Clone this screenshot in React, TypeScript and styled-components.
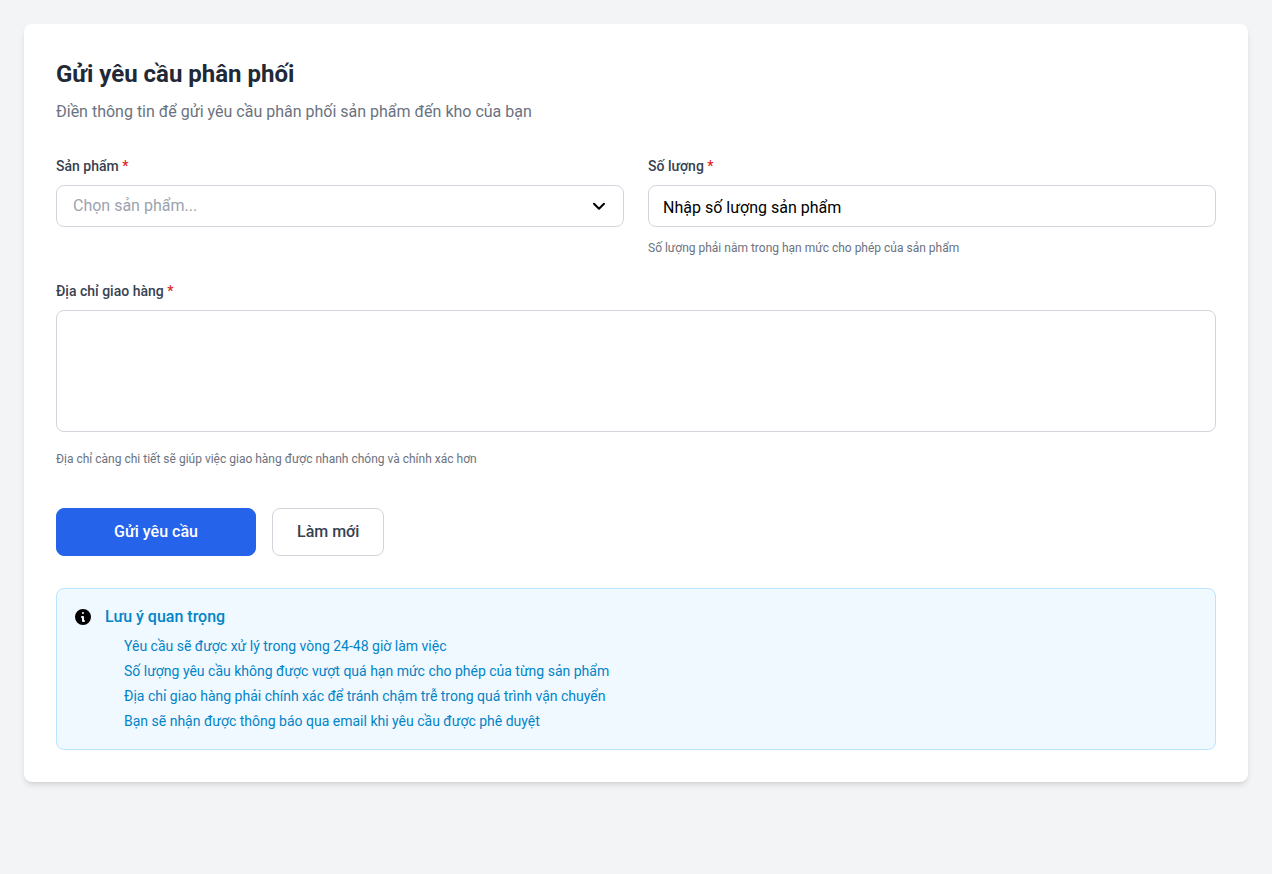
import React from 'react';
import styled, { createGlobalStyle } from 'styled-components';

const GlobalStyle = createGlobalStyle`
  *, *::before, *::after { box-sizing: border-box; }
  body {
    margin: 0;
    background: #f3f4f6;
    color: #1f2937;
    font-family: Roboto, sans-serif;
    font-size: 16px;
    line-height: 24px;
  }
  button, input, textarea, select { font: inherit; }
`;

const Page = styled.div`
  padding: 24px;
`;

const Card = styled.main`
  padding: 32px;
  background: #ffffff;
  border-radius: 8px;
  box-shadow: 0 4px 6px -1px rgba(0, 0, 0, 0.1), 0 2px 4px -2px rgba(0, 0, 0, 0.1);
`;

const Header = styled.header`
  margin-bottom: 32px;
`;

const Title = styled.h1`
  margin: 0 0 8px;
  font-size: 24px;
  line-height: 36px;
  font-weight: 700;
`;

const Subtitle = styled.p`
  margin: 0;
  color: #6b7280;
`;

const Form = styled.form`
  display: flex;
  flex-direction: column;
  gap: 24px;
`;

const Row = styled.div`
  display: grid;
  grid-template-columns: repeat(2, minmax(0, 1fr));
  gap: 24px;
`;

const Field = styled.div`
  display: flex;
  flex-direction: column;
`;

const Label = styled.label`
  margin-bottom: 8px;
  color: #374151;
  font-size: 14px;
  line-height: 21px;
  font-weight: 500;
`;

const Required = styled.span`
  color: #dc2626;
`;

const SelectBox = styled.div`
  display: grid;
  align-items: center;

  > * { grid-area: 1 / 1; }
  > svg {
    justify-self: end;
    margin-right: 16px;
    pointer-events: none;
  }
`;

const Select = styled.select`
  appearance: none;
  width: 100%;
  height: 42px;
  padding: 0 40px 0 16px;
  border: 1px solid #d1d5db;
  border-radius: 8px;
  background: #ffffff;
  color: #9ca3af;
`;

const Input = styled.input`
  width: 100%;
  height: 42px;
  padding: 2px 14px 0;
  border: 1px solid #d1d5db;
  border-radius: 8px;
  background: #ffffff;
  color: #000000;
  &::placeholder { color: #000000; opacity: 1; }
`;

const TextArea = styled.textarea`
  display: block;
  width: 100%;
  height: 122px;
  padding: 12px 16px;
  border: 1px solid #d1d5db;
  border-radius: 8px;
  background: #ffffff;
  resize: none;
`;

const Hint = styled.p<{ $gap: number }>`
  margin: ${({ $gap }) => $gap}px 0 0;
  color: #6b7280;
  font-size: 12px;
  line-height: 18px;
`;

const Actions = styled.div`
  display: flex;
  gap: 16px;
  padding-top: 16px;
`;

const Button = styled.button<{ $primary?: boolean }>`
  height: 48px;
  min-width: ${({ $primary }) => ($primary ? '200px' : '112px')};
  padding: 0 24px;
  border: 1px solid ${({ $primary }) => ($primary ? '#2563eb' : '#d1d5db')};
  border-radius: 8px;
  background: ${({ $primary }) => ($primary ? '#2563eb' : '#ffffff')};
  color: ${({ $primary }) => ($primary ? '#ffffff' : '#374151')};
  font-weight: 500;
  cursor: pointer;
`;

const Notice = styled.aside`
  display: flex;
  gap: 12px;
  margin-top: 32px;
  padding: 16px;
  border: 1px solid #bae6fd;
  border-radius: 8px;
  background: #f0f9ff;
  color: #0284c7;

  > svg { flex: none; margin-top: 2px; }
`;

const NoticeTitle = styled.h2`
  margin: 0 0 8px;
  font-size: 16px;
  line-height: 24px;
  font-weight: 500;
`;

const NoticeList = styled.ul`
  display: flex;
  flex-direction: column;
  gap: 6px;
  margin: 0;
  padding: 0 0 2px 19px;
  list-style: none;
  font-size: 14px;
  line-height: 19px;
`;

const notes = [
  'Yêu cầu sẽ được xử lý trong vòng 24-48 giờ làm việc',
  'Số lượng yêu cầu không được vượt quá hạn mức cho phép của từng sản phẩm',
  'Địa chỉ giao hàng phải chính xác để tránh chậm trễ trong quá trình vận chuyển',
  'Bạn sẽ nhận được thông báo qua email khi yêu cầu được phê duyệt',
];

export default function App() {
  return (
    <Page>
      <GlobalStyle />
      <Card>
        <Header>
          <Title>Gửi yêu cầu phân phối</Title>
          <Subtitle>Điền thông tin để gửi yêu cầu phân phối sản phẩm đến kho của bạn</Subtitle>
        </Header>
        <Form onSubmit={(event) => event.preventDefault()}>
          <Row>
            <Field>
              <Label htmlFor="product">Sản phẩm <Required>*</Required></Label>
              <SelectBox>
                <Select id="product" defaultValue="">
                  <option value="">Chọn sản phẩm...</option>
                </Select>
                <svg width="18" height="16" viewBox="0 0 18 16" fill="none" aria-hidden="true">
                  <path d="M4 5.7l5 5 5-5" stroke="#000" strokeWidth="2" strokeLinecap="round" strokeLinejoin="round" />
                </svg>
              </SelectBox>
            </Field>
            <Field>
              <Label htmlFor="quantity">Số lượng <Required>*</Required></Label>
              <Input id="quantity" placeholder="Nhập số lượng sản phẩm" />
              <Hint $gap={12}>Số lượng phải nằm trong hạn mức cho phép của sản phẩm</Hint>
            </Field>
          </Row>
          <Field>
            <Label htmlFor="address">Địa chỉ giao hàng <Required>*</Required></Label>
            <TextArea id="address" />
            <Hint $gap={18}>Địa chỉ càng chi tiết sẽ giúp việc giao hàng được nhanh chóng và chính xác hơn</Hint>
          </Field>
          <Actions>
            <Button type="submit" $primary>Gửi yêu cầu</Button>
            <Button type="reset">Làm mới</Button>
          </Actions>
        </Form>
        <Notice>
          <svg width="20" height="20" viewBox="0 0 20 20" aria-hidden="true">
            <path fill="#000" fillRule="evenodd" clipRule="evenodd" d="M18 10a8 8 0 11-16 0 8 8 0 0116 0zm-7-4a1 1 0 11-2 0 1 1 0 012 0zM9 9a1 1 0 000 2v3a1 1 0 001 1h1a1 1 0 100-2v-3a1 1 0 00-1-1H9z" />
          </svg>
          <div>
            <NoticeTitle>Lưu ý quan trọng</NoticeTitle>
            <NoticeList>
              {notes.map((note) => <li key={note}>{note}</li>)}
            </NoticeList>
          </div>
        </Notice>
      </Card>
    </Page>
  );
}
